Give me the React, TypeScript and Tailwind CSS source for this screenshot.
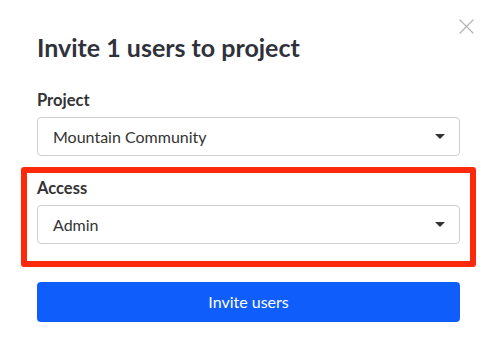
import React from "react";

function Caret() {
  return (
    <svg width="10" height="5" viewBox="0 0 10 5" className="shrink-0">
      <path d="M0 0 L10 0 L5 5 Z" fill="#333" />
    </svg>
  );
}

function Select({ value }: { value: string }) {
  return (
    <div className="flex h-[39px] items-center justify-between rounded-[4px] border border-[#cfcfcf] bg-white pl-[15px] pr-[14px]">
      <span className="text-[16px] leading-[20px] text-[#333]">{value}</span>
      <Caret />
    </div>
  );
}

export default function App() {
  return (
    <div
      className="relative h-[360px] w-[497px] bg-white"
      style={{ fontFamily: "Lato, 'Open Sans', sans-serif" }}
    >
      <button className="absolute left-[459px] top-[19px] h-[15px] w-[15px]" aria-label="Close">
        <svg width="15" height="15" viewBox="0 0 15 15">
          <path d="M0.5 0.5 L14.5 14.5 M14.5 0.5 L0.5 14.5" stroke="#b5b5b5" strokeWidth="1.2" />
        </svg>
      </button>
      <div className="flex flex-col px-[37px] pt-[31px]">
        <h1 className="text-[25px] font-bold leading-[32px] text-[#2f323a]">Invite 1 users to project</h1>
        <div className="mt-[27px] flex flex-col">
          <label className="mb-[7px] text-[16.5px] font-bold leading-[20px] text-[#333]">Project</label>
          <Select value="Mountain Community" />
        </div>
        <div className="-mx-[16px] mt-[11px] rounded-[3px] border-[6px] border-[#fc2a0a] px-[10px] pb-[17px] pt-[5px]">
          <div className="flex flex-col">
            <label className="mb-[7px] text-[16.5px] font-bold leading-[20px] text-[#333]">Access</label>
            <Select value="Admin" />
          </div>
        </div>
        <button className="mt-[15px] flex h-[40px] items-center justify-center rounded-[4px] bg-[#0f5efb] text-[16px] leading-[20px] text-white">
          Invite users
        </button>
      </div>
    </div>
  );
}
